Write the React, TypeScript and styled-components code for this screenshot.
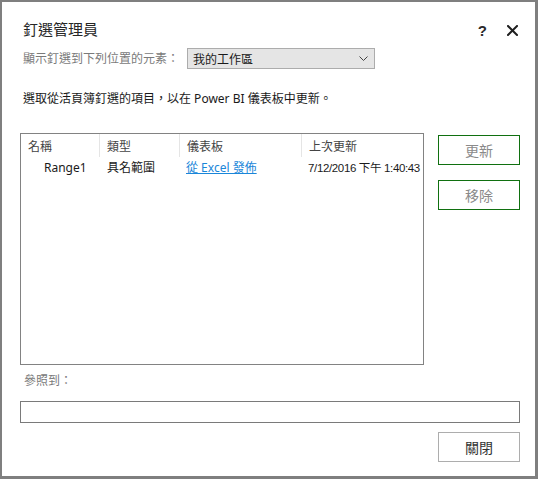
import styled, { createGlobalStyle } from "styled-components";

const GlobalStyle = createGlobalStyle`
  html, body {
    margin: 0;
    padding: 0;
    background: #ffffff;
  }
  body {
    font-family: "Noto Sans", "Noto Sans CJK TC", sans-serif;
    font-size: 12px;
    color: #262626;
  }
`;

const columns = [
  { key: "name", label: "名稱", width: 79 },
  { key: "type", label: "類型", width: 80 },
  { key: "dash", label: "儀表板", width: 122 },
  { key: "updated", label: "上次更新", width: 0 },
];

const App = () => {
  return (
    <>
      <GlobalStyle />
      <StyledDialog>
        <StyledTitleBar>
          <div className="title">釘選管理員</div>
          <div className="actions">
            <span className="help">?</span>
            <svg width="11" height="11" viewBox="0 0 11 11">
              <path
                d="M1 1 L10 10 M10 1 L1 10"
                stroke="#1f1f1f"
                strokeWidth="2"
                strokeLinecap="square"
              />
            </svg>
          </div>
        </StyledTitleBar>

        <StyledLocationRow>
          <StyledMutedLabel>顯示釘選到下列位置的元素：</StyledMutedLabel>
          <StyledSelect>
            <span>我的工作區</span>
            <svg width="9" height="6" viewBox="0 0 9 6">
              <path d="M0.5 0.5 L4.5 4.5 L8.5 0.5" stroke="#444" fill="none" />
            </svg>
          </StyledSelect>
        </StyledLocationRow>

        <StyledInstruction>
          選取從活頁簿釘選的項目，以在 Power BI 儀表板中更新。
        </StyledInstruction>

        <StyledMain>
          <StyledList>
            <StyledHeaderRow>
              {columns.map((c) => (
                <StyledCell key={c.key} $width={c.width} $header>
                  {c.label}
                </StyledCell>
              ))}
            </StyledHeaderRow>
            <StyledRow>
              <StyledCell $width={79} $indent={23}>
                Range1
              </StyledCell>
              <StyledCell $width={80}>具名範圍</StyledCell>
              <StyledCell $width={122} $indent={6}>
                <StyledLink>從 Excel 發佈</StyledLink>
              </StyledCell>
              <StyledCell $width={0} $indent={6}>
                <StyledDate>7/12/2016 下午 1:40:43</StyledDate>
              </StyledCell>
            </StyledRow>
          </StyledList>

          <StyledSideButtons>
            <StyledButton $variant="accent">更新</StyledButton>
            <StyledButton $variant="accent">移除</StyledButton>
          </StyledSideButtons>
        </StyledMain>

        <StyledRefLabel>參照到：</StyledRefLabel>
        <StyledInput />

        <StyledFooter>
          <StyledButton $variant="plain">關閉</StyledButton>
        </StyledFooter>
      </StyledDialog>
    </>
  );
};

const StyledDialog = styled.div`
  width: 538px;
  height: 479px;
  box-sizing: border-box;
  border-style: solid;
  border-color: #7f7f7f;
  border-width: 2px 3px 3px 2px;
  padding: 16px 15px 0 18px;
  display: flex;
  flex-direction: column;
  background: #fff;
`;

const StyledTitleBar = styled.div`
  height: 22px;
  display: flex;
  align-items: center;
  justify-content: space-between;

  .title {
    padding-left: 3px;
    font-size: 15px;
    line-height: 22px;
    color: #262626;
  }

  .actions {
    display: flex;
    align-items: center;
    gap: 20px;
    padding-right: 2px;
    padding-top: 2px;
  }

  .help {
    font-family: "Liberation Sans", sans-serif;
    font-size: 15px;
    font-weight: bold;
    color: #2a2a2a;
    line-height: 1;
  }
`;

const StyledLocationRow = styled.div`
  margin-top: 8px;
  display: flex;
  align-items: center;
  gap: 8px;
  padding-left: 3px;
`;

const StyledMutedLabel = styled.div`
  color: #7a7a7a;
  line-height: 16px;
`;

const StyledSelect = styled.div`
  width: 188px;
  height: 21px;
  box-sizing: border-box;
  background: #e5e5e5;
  border: 1px solid #acacac;
  display: flex;
  align-items: center;
  justify-content: space-between;
  padding: 0 6px 0 5px;
  color: #1a1a1a;
`;

const StyledInstruction = styled.div`
  margin-top: 22px;
  padding-left: 3px;
  line-height: 16px;
  color: #1a1a1a;
`;

const StyledMain = styled.div`
  margin-top: 26px;
  display: flex;
  gap: 14px;
`;

const StyledList = styled.div`
  width: 404px;
  height: 232px;
  box-sizing: border-box;
  border: 1px solid #828282;
`;

const StyledHeaderRow = styled.div`
  display: flex;
  height: 23px;
`;

const StyledRow = styled.div`
  display: flex;
  height: 20px;
  align-items: center;
`;

const StyledCell = styled.div<{
  $width: number;
  $header?: boolean;
  $indent?: number;
}>`
  ${(p) => (p.$width ? `width: ${p.$width}px;` : "flex: 1;")}
  box-sizing: border-box;
  padding-left: ${(p) => p.$indent ?? 7}px;
  white-space: nowrap;
  overflow: hidden;
  display: flex;
  align-items: center;
  color: ${(p) => (p.$header ? "#444" : "#1a1a1a")};
  ${(p) =>
    p.$header &&
    `
    height: 23px;
    &:not(:last-child) {
      border-right: 1px solid #e5e5e5;
    }
  `}
`;

const StyledDate = styled.span`
  font-family: "Liberation Sans", "Noto Sans CJK TC", sans-serif;
  font-size: 11.5px;
  letter-spacing: -0.35px;
`;

const StyledLink = styled.span`
  color: #1a86d9;
  text-decoration: underline;
`;

const StyledSideButtons = styled.div`
  padding-top: 2px;
  display: flex;
  flex-direction: column;
  gap: 15px;
`;

const StyledButton = styled.div<{ $variant: "accent" | "plain" }>`
  width: 82px;
  height: 30px;
  box-sizing: border-box;
  display: flex;
  align-items: center;
  justify-content: center;
  font-size: 14px;
  border: 1px solid
    ${(p) => (p.$variant === "accent" ? "#107010" : "#adadad")};
  color: ${(p) => (p.$variant === "accent" ? "#8a8a8a" : "#333")};
  background: #fff;
  cursor: pointer;
`;

const StyledRefLabel = styled.div`
  margin-top: 8px;
  padding-left: 4px;
  line-height: 16px;
  color: #7a7a7a;
`;

const StyledInput = styled.div`
  margin-top: 12px;
  height: 22px;
  box-sizing: border-box;
  border: 1px solid #7a7a7a;
`;

const StyledFooter = styled.div`
  margin-top: 9px;
  display: flex;
  justify-content: flex-end;
`;

export default App;
